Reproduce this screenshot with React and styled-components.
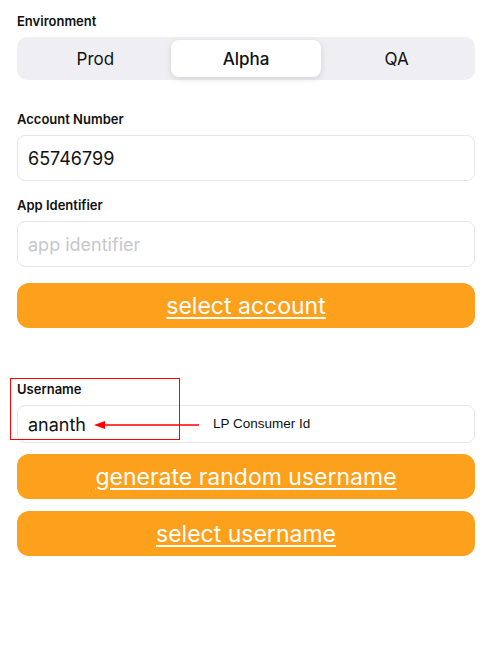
import React from 'react';
import styled, { createGlobalStyle } from 'styled-components';

const GlobalStyle = createGlobalStyle`
    body {
        margin: 0;
        background: #ffffff;
        font-family: Inter, "Noto Sans", "Liberation Sans", sans-serif;
        color: #111111;
    }
`;

const Page = styled.div`
    display: flex;
    flex-direction: column;
    padding: 13px 25px 0 17px;
`;

const Label = styled.div`
    height: 16px;
    line-height: 16px;
    font-size: 13px;
    font-weight: 600;
    margin-bottom: ${props => props.$gap || 8}px;
`;

const Segmented = styled.div`
    display: grid;
    grid-template-columns: repeat(3, 1fr);
    height: 43px;
    padding: 3px;
    box-sizing: border-box;
    border-radius: 10px;
    background: #efeff3;
`;

const Segment = styled.div`
    display: flex;
    align-items: center;
    justify-content: center;
    font-size: 17px;
    border-radius: 8px;
    background: ${props => (props.$active ? '#ffffff' : 'transparent')};
    box-shadow: ${props => (props.$active ? '0 2px 6px rgba(0,0,0,0.12)' : 'none')};
    font-weight: ${props => (props.$active ? 500 : 400)};
`;

const Input = styled.div`
    display: flex;
    align-items: center;
    height: ${props => props.$height || 46}px;
    padding: 0 10px;
    box-sizing: border-box;
    border: 1px solid #e6e6ea;
    border-radius: 8px;
    font-size: 18px;
    color: ${props => (props.$placeholder ? '#c7c7cc' : '#111111')};
`;

const Button = styled.div`
    display: flex;
    align-items: center;
    justify-content: center;
    height: 45px;
    border-radius: 12px;
    background: #fda01b;
    color: #ffffff;
    font-size: 23px;
    text-decoration: underline;
    text-decoration-thickness: 1.5px;
    text-underline-offset: 3px;
    margin-top: ${props => props.$top || 0}px;
`;

const UserBlock = styled.div`
    position: relative;
    margin-top: 53px;
`;

const Annotation = styled.div`
    position: absolute;
    left: -7px;
    top: -3px;
    width: 170px;
    height: 62px;
    box-sizing: border-box;
    border: 1.5px solid #ff0000;
    pointer-events: none;
`;

const Arrow = styled.svg`
    position: absolute;
    left: 76px;
    top: 37px;
`;

const Note = styled.span`
    position: absolute;
    left: 196px;
    top: 35px;
    font-family: "Liberation Sans", Arial, sans-serif;
    font-size: 13.5px;
    color: #111111;
`;

const App = () => (
    <Page>
        <GlobalStyle />
        <Label>Environment</Label>
        <Segmented>
            <Segment>Prod</Segment>
            <Segment $active>Alpha</Segment>
            <Segment>QA</Segment>
        </Segmented>

        <Label style={{ marginTop: 31 }}>Account Number</Label>
        <Input>65746799</Input>

        <Label style={{ marginTop: 16 }}>App Identifier</Label>
        <Input $placeholder>app identifier</Input>

        <Button $top={16}>select account</Button>

        <UserBlock>
            <Label $gap={8}>Username</Label>
            <Input $height={38}>ananth</Input>
            <Annotation />
            <Arrow width="110" height="14" viewBox="0 0 110 14">
                <line x1="10" y1="7" x2="106" y2="7" stroke="#ff0000" strokeWidth="1.5" />
                <polygon points="1,7 12,3 12,11" fill="#ff0000" />
            </Arrow>
            <Note>LP Consumer Id</Note>
        </UserBlock>

        <Button $top={11}>generate random username</Button>
        <Button $top={12}>select username</Button>
    </Page>
);

export default App;
